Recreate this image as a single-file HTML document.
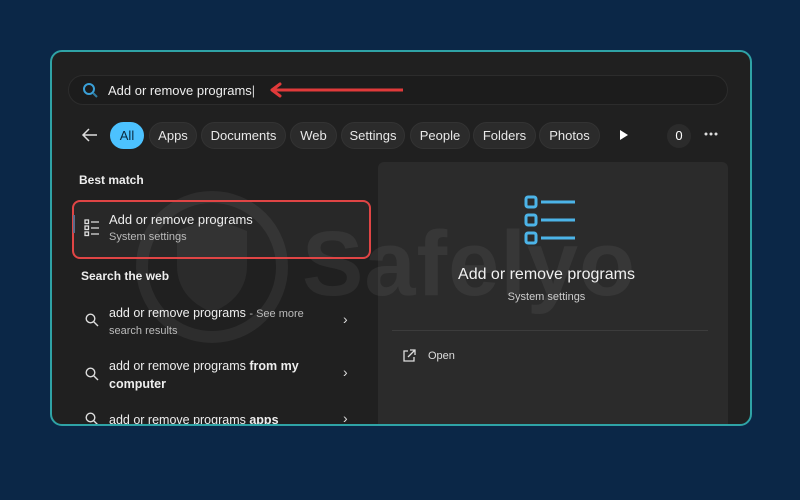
<!DOCTYPE html>
<html><head><style>
*{margin:0;padding:0;box-sizing:border-box}
body{width:800px;height:500px;background:#0b2747;font-family:"Liberation Sans",sans-serif;position:relative;overflow:hidden;color:#fff}
.panel{position:absolute;left:50px;top:50px;width:702px;height:376px;border:2px solid #2fa3a6;border-radius:12px;background:#202020;overflow:hidden}
.a{position:absolute}
.search{left:16px;top:23px;width:660px;height:30px;border-radius:15px;background:#1c1c1c;border:1px solid #2c2c2c}
.chip{position:absolute;top:70px;height:27px;border-radius:14px;background:#2b2b2b;border:1px solid #333;font-size:13px;color:#e8e8e8;line-height:25px;text-align:center}
.right{left:326px;top:110px;width:350px;height:280px;background:#2b2b2b;border-radius:6px}
.t{font-size:12.5px;color:#eee}
.s{font-size:11px;color:#bbb}
.wm{position:absolute;color:rgba(255,255,255,0.06);font-weight:bold;font-size:92px;left:250px;top:160px;letter-spacing:1px}
</style></head><body>
<div class="panel">
  <div class="a search"></div>
  <svg class="a" style="left:30px;top:30px" width="16" height="16" viewBox="0 0 16 16"><circle cx="7" cy="7" r="5" fill="none" stroke="#3aa0d8" stroke-width="2"/><path d="M11 11l4 4" stroke="#2f7ba0" stroke-width="2"/></svg>
  <div class="a" style="left:56px;top:31px;font-size:13px;color:#eee">Add or remove programs<span style="color:#ccc">|</span></div>
  <svg class="a" style="left:208px;top:30px" width="145" height="16" viewBox="0 0 145 16"><path d="M14 8H143" stroke="#e03a3a" stroke-width="3"/><path d="M12 8L20 2M12 8L20 14" stroke="#e03a3a" stroke-width="3" stroke-linecap="round"/></svg>
  <svg class="a" style="left:29px;top:74px" width="18" height="18" viewBox="0 0 18 18"><path d="M16 9H2M8 3L2 9l6 6" fill="none" stroke="#ddd" stroke-width="1.5"/></svg>
  <div class="chip" style="left:58px;width:34px;background:#4cc2ff;border-color:#4cc2ff;color:#0a2a40">All</div>
  <div class="chip" style="left:97px;width:48px">Apps</div>
  <div class="chip" style="left:149px;width:85px">Documents</div>
  <div class="chip" style="left:238px;width:47px">Web</div>
  <div class="chip" style="left:289px;width:64px">Settings</div>
  <div class="chip" style="left:358px;width:60px">People</div>
  <div class="chip" style="left:421px;width:63px">Folders</div>
  <div class="chip" style="left:487px;width:61px">Photos</div>
  <svg class="a" style="left:566px;top:76px" width="12" height="14"><path d="M2 2L10 7 2 12Z" fill="#fff"/></svg>
  <div class="a" style="left:615px;top:72px;width:24px;height:24px;border-radius:12px;background:#2b2b2b;font-size:13px;line-height:24px;text-align:center">0</div>
  <svg class="a" style="left:652px;top:80px" width="14" height="4"><circle cx="2" cy="2" r="1.5" fill="#ddd"/><circle cx="7" cy="2" r="1.5" fill="#ddd"/><circle cx="12" cy="2" r="1.5" fill="#ddd"/></svg>
  <div class="a right"></div>
  <div class="wm">Safelyo</div>
  <svg class="a" style="left:80px;top:135px" width="170" height="170"><circle cx="80" cy="80" r="70" fill="none" stroke="rgba(255,255,255,0.06)" stroke-width="12"/><path d="M80 30l35 14v35c0 25-18 40-35 46-17-6-35-21-35-46V44z" fill="rgba(255,255,255,0.05)"/></svg>
  <div class="a" style="left:27px;top:121px;font-size:12px;font-weight:bold;color:#eee">Best match</div>
  <div class="a" style="left:20px;top:148px;width:299px;height:59px;border:2px solid #e04545;border-radius:8px;background:rgba(255,255,255,0.04)"></div>
  <div class="a" style="left:21px;top:163px;width:2px;height:18px;background:#5a6b8a"></div>
  <svg class="a" style="left:32px;top:167px" width="16" height="18" viewBox="0 0 16 18"><g fill="none" stroke="#ddd" stroke-width="1.3"><rect x="1" y="1" width="3.5" height="3.5"/><rect x="1" y="7" width="3.5" height="3.5"/><rect x="1" y="13" width="3.5" height="3.5"/><path d="M7 3h8M7 9h8M7 15h8"/></g></svg>
  <div class="a t" style="left:57px;top:160px;font-size:13px">Add or remove programs</div>
  <div class="a s" style="left:57px;top:179px">System settings</div>
  <div class="a" style="left:29px;top:217px;font-size:12px;font-weight:bold;color:#eee">Search the web</div>
  <svg class="a" style="left:33px;top:261px" width="14" height="14" viewBox="0 0 14 14"><circle cx="5.5" cy="5.5" r="4.3" fill="none" stroke="#ddd" stroke-width="1.4"/><path d="M8.7 8.7L13 13" stroke="#ddd" stroke-width="1.4"/></svg>
  <div class="a t" style="left:57px;top:254px">add or remove programs <span style="font-size:11px;color:#bbb">- See more</span></div>
  <div class="a s" style="left:57px;top:273px">search results</div>
  <div class="a" style="left:291px;top:259px;color:#ddd;font-size:14px">›</div>
  <svg class="a" style="left:33px;top:315px" width="14" height="14" viewBox="0 0 14 14"><circle cx="5.5" cy="5.5" r="4.3" fill="none" stroke="#ddd" stroke-width="1.4"/><path d="M8.7 8.7L13 13" stroke="#ddd" stroke-width="1.4"/></svg>
  <div class="a t" style="left:57px;top:307px">add or remove programs <b>from my</b></div>
  <div class="a t" style="left:57px;top:325px"><b>computer</b></div>
  <div class="a" style="left:291px;top:312px;color:#ddd;font-size:14px">›</div>
  <svg class="a" style="left:33px;top:360px" width="14" height="14" viewBox="0 0 14 14"><circle cx="5.5" cy="5.5" r="4.3" fill="none" stroke="#ddd" stroke-width="1.4"/><path d="M8.7 8.7L13 13" stroke="#ddd" stroke-width="1.4"/></svg>
  <div class="a t" style="left:57px;top:361px">add or remove programs <b>apps</b></div>
  <div class="a" style="left:291px;top:358px;color:#ddd;font-size:14px">›</div>
  <svg class="a" style="left:471px;top:142px" width="54" height="52" viewBox="0 0 54 52"><g fill="none" stroke="#4cb4e8" stroke-width="3"><rect x="3" y="3" width="10" height="10" rx="2"/><rect x="3" y="21" width="10" height="10" rx="2"/><rect x="3" y="39" width="10" height="10" rx="2"/><path d="M18 8h34M18 26h34M18 44h34"/></g></svg>
  <div class="a" style="left:322px;top:214px;width:345px;text-align:center;font-size:16px;color:#f0f0f0">Add or remove programs</div>
  <div class="a" style="left:322px;top:239px;width:345px;text-align:center;font-size:11px;color:#ccc">System settings</div>
  <div class="a" style="left:340px;top:278px;width:316px;height:1px;background:#3c3c3c"></div>
  <svg class="a" style="left:350px;top:297px" width="14" height="14" viewBox="0 0 14 14"><path d="M6 2H2v10h10V8M8 1h5v5M13 1L6 8" fill="none" stroke="#ddd" stroke-width="1.3"/></svg>
  <div class="a" style="left:376px;top:298px;font-size:11px;color:#ddd">Open</div>
</div>
</body></html>
